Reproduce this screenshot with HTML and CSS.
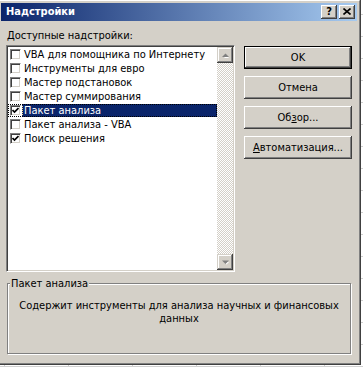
FILE: index.html
```html
<!DOCTYPE html>
<html lang="ru">
<head>
<meta charset="utf-8">
<title>Надстройки</title>
<link rel="stylesheet" href="styles.css">
</head>
<body>
<div class="dialog">
  <div class="frame">
    <div class="titlebar">
      <span class="title">Надстройки</span>
      <div class="caption-btns">
        <div class="cap-btn help">?</div>
        <div class="cap-btn close">
          <svg width="8" height="7" viewBox="0 0 8 7"><path d="M0.5 0.5 L7.5 6.5 M7.5 0.5 L0.5 6.5" stroke="#000" stroke-width="1.6" fill="none"/></svg>
        </div>
      </div>
    </div>
    <div class="client">
      <div class="top">
        <div class="left">
          <div class="label"><u>Д</u>оступные надстройки:</div>
          <div class="listbox">
            <div class="items">
              <div class="item"><span class="cb"></span><span class="txt">VBA для помощника по Интернету</span></div>
              <div class="item"><span class="cb"></span><span class="txt">Инструменты для евро</span></div>
              <div class="item"><span class="cb"></span><span class="txt">Мастер подстановок</span></div>
              <div class="item"><span class="cb"></span><span class="txt">Мастер суммирования</span></div>
              <div class="item selected"><span class="cb checked"><svg width="7" height="7" viewBox="0 0 7 7"><path d="M0.5 3 L2.5 5 L6.5 1" stroke="#000" stroke-width="1.7" fill="none"/></svg></span><span class="txt">Пакет анализа</span></div>
              <div class="item"><span class="cb"></span><span class="txt">Пакет анализа - VBA</span></div>
              <div class="item"><span class="cb checked"><svg width="7" height="7" viewBox="0 0 7 7"><path d="M0.5 3 L2.5 5 L6.5 1" stroke="#000" stroke-width="1.7" fill="none"/></svg></span><span class="txt">Поиск решения</span></div>
            </div>
            <div class="scrollbar">
              <div class="sb-btn"><svg width="7" height="5" viewBox="0 0 7 5"><path d="M1 4 L6 4 L3.5 1.5 Z" fill="#fff" transform="translate(1 1)"/><path d="M0 4 L7 4 L3.5 0.5 Z" fill="#808080"/></svg></div>
              <div class="track"></div>
              <div class="sb-btn"><svg width="7" height="5" viewBox="0 0 7 5"><path d="M1 1 L6 1 L3.5 3.5 Z" fill="#fff" transform="translate(1 1)"/><path d="M0 0.5 L7 0.5 L3.5 4 Z" fill="#808080"/></svg></div>
            </div>
          </div>
        </div>
        <div class="buttons">
          <div class="btn default">OK</div>
          <div class="btn">Отмена</div>
          <div class="btn">Об<u>з</u>ор...</div>
          <div class="btn"><u>А</u>втоматизация...</div>
        </div>
      </div>
      <fieldset class="group">
        <legend>Пакет анализа</legend>
        <p class="desc">Содержит инструменты для анализа научных и финансовых<br>данных</p>
      </fieldset>
    </div>
  </div>
</div>
</body>
</html>
```

FILE: styles.css
```css
html, body {
  margin: 0;
  padding: 0;
}
body {
  width: 363px;
  height: 367px;
  overflow: hidden;
  background-color: #fff;
  background-image:
    linear-gradient(#000, #000),
    linear-gradient(to right, #d0d0d0 1px, transparent 1px),
    linear-gradient(to bottom, #d0d0d0 1px, transparent 1px);
  background-size: 40px 2px, 64px 100%, 100% 22px;
  background-position: 260px 0, 4px 0, 0 14px;
  background-repeat: no-repeat, repeat, repeat;
  font-family: "DejaVu Sans Condensed", "DejaVu Sans", sans-serif;
  font-size: 11px;
  color: #000;
}
.dialog {
  margin: -1px 0 0 -3px;
  width: 364px;
  height: 366px;
  box-sizing: border-box;
  border: 1px solid;
  border-color: #d4d0c8 #404040 #404040 #d4d0c8;
  background: #d4d0c8;
}
.frame {
  height: 100%;
  box-sizing: border-box;
  border: 1px solid;
  border-color: #fff #808080 #808080 #fff;
  padding: 2px;
  display: flex;
  flex-direction: column;
}
.titlebar {
  height: 18px;
  flex: none;
  display: flex;
  align-items: flex-start;
  justify-content: space-between;
  background: linear-gradient(to right, #0a246a, #a6caf0);
  padding: 0 2px 0 5px;
}
.title {
  color: #fff;
  font-weight: bold;
  line-height: 18px;
}
.caption-btns {
  display: flex;
  gap: 2px;
  margin-top: 2px;
}
.cap-btn {
  width: 16px;
  height: 14px;
  box-sizing: border-box;
  background: #d4d0c8;
  box-shadow: inset -1px -1px #404040, inset 1px 1px #fff, inset -2px -2px #808080;
  display: flex;
  align-items: center;
  justify-content: center;
  font-weight: bold;
  font-size: 11px;
  line-height: 14px;
  padding-bottom: 1px;
}
.cap-btn svg { display: block; }
.client {
  flex: 1;
  padding: 8px 5px 0 5px;
  display: flex;
  flex-direction: column;
}
.top {
  display: flex;
}
.left {
  width: 229px;
}
.label {
  line-height: 13px;
  padding-left: 1px;
  margin-bottom: 3px;
}
.listbox {
  height: 227px;
  box-sizing: border-box;
  border: 1px solid;
  border-color: #808080 #fff #fff #808080;
  box-shadow: inset 1px 1px #404040, inset -1px -1px #d4d0c8;
  background: #fff;
  padding: 1px;
  display: flex;
}
.items {
  flex: 1;
  padding-top: 1px;
}
.item {
  height: 13px;
  margin-bottom: 1px;
  display: flex;
  align-items: flex-start;
  padding-left: 2px;
}
.cb {
  width: 11px;
  height: 11px;
  box-sizing: border-box;
  margin-top: 1px;
  margin-right: 1px;
  border: 1px solid;
  border-color: #808080 #fff #fff #808080;
  box-shadow: inset 1px 1px #404040, inset -1px -1px #d4d0c8;
  background: #fff;
  display: flex;
  align-items: center;
  justify-content: center;
  flex: none;
}
.cb svg { display: block; }
.txt {
  flex: 1;
  line-height: 13px;
  padding: 0 2px;
  white-space: nowrap;
}
.item.selected {
  outline: 1px dotted #000;
  outline-offset: -1px;
}
.item.selected .txt {
  background: #0a246a;
  color: #fff;
  outline: 1px dotted #f5db95;
  outline-offset: -1px;
}
.scrollbar {
  width: 16px;
  display: flex;
  flex-direction: column;
  background: repeating-conic-gradient(#d4d0c8 0 25%, #fff 0 50%) 0 0 / 2px 2px;
}
.sb-btn {
  width: 16px;
  height: 16px;
  box-sizing: border-box;
  background: #d4d0c8;
  box-shadow: inset -1px -1px #404040, inset 1px 1px #d4d0c8, inset -2px -2px #808080, inset 2px 2px #fff;
  display: flex;
  align-items: center;
  justify-content: center;
}
.sb-btn svg { display: block; overflow: visible; }
.track { flex: 1; }
.buttons {
  margin-left: 9px;
  padding-top: 17px;
  display: flex;
  flex-direction: column;
  gap: 7px;
}
.btn {
  width: 108px;
  height: 23px;
  box-sizing: border-box;
  background: #d4d0c8;
  box-shadow: inset -1px -1px #404040, inset 1px 1px #fff, inset -2px -2px #808080;
  display: flex;
  align-items: center;
  justify-content: center;
  line-height: 13px;
}
.btn.default {
  border: 1px solid #000;
}
.group {
  margin: 5px 1px 0 1px;
  padding: 0;
  border: 1px solid #808080;
  box-shadow: inset 1px 1px #fff, 1px 1px #fff;
  height: 77px;
  box-sizing: border-box;
  min-width: 0;
}
.group legend {
  margin-left: 2px;
  padding: 0 1px;
  line-height: 13px;
  background: #d4d0c8;
}
.desc {
  margin: 9px 0 0;
  text-align: center;
  line-height: 13px;
}
```
